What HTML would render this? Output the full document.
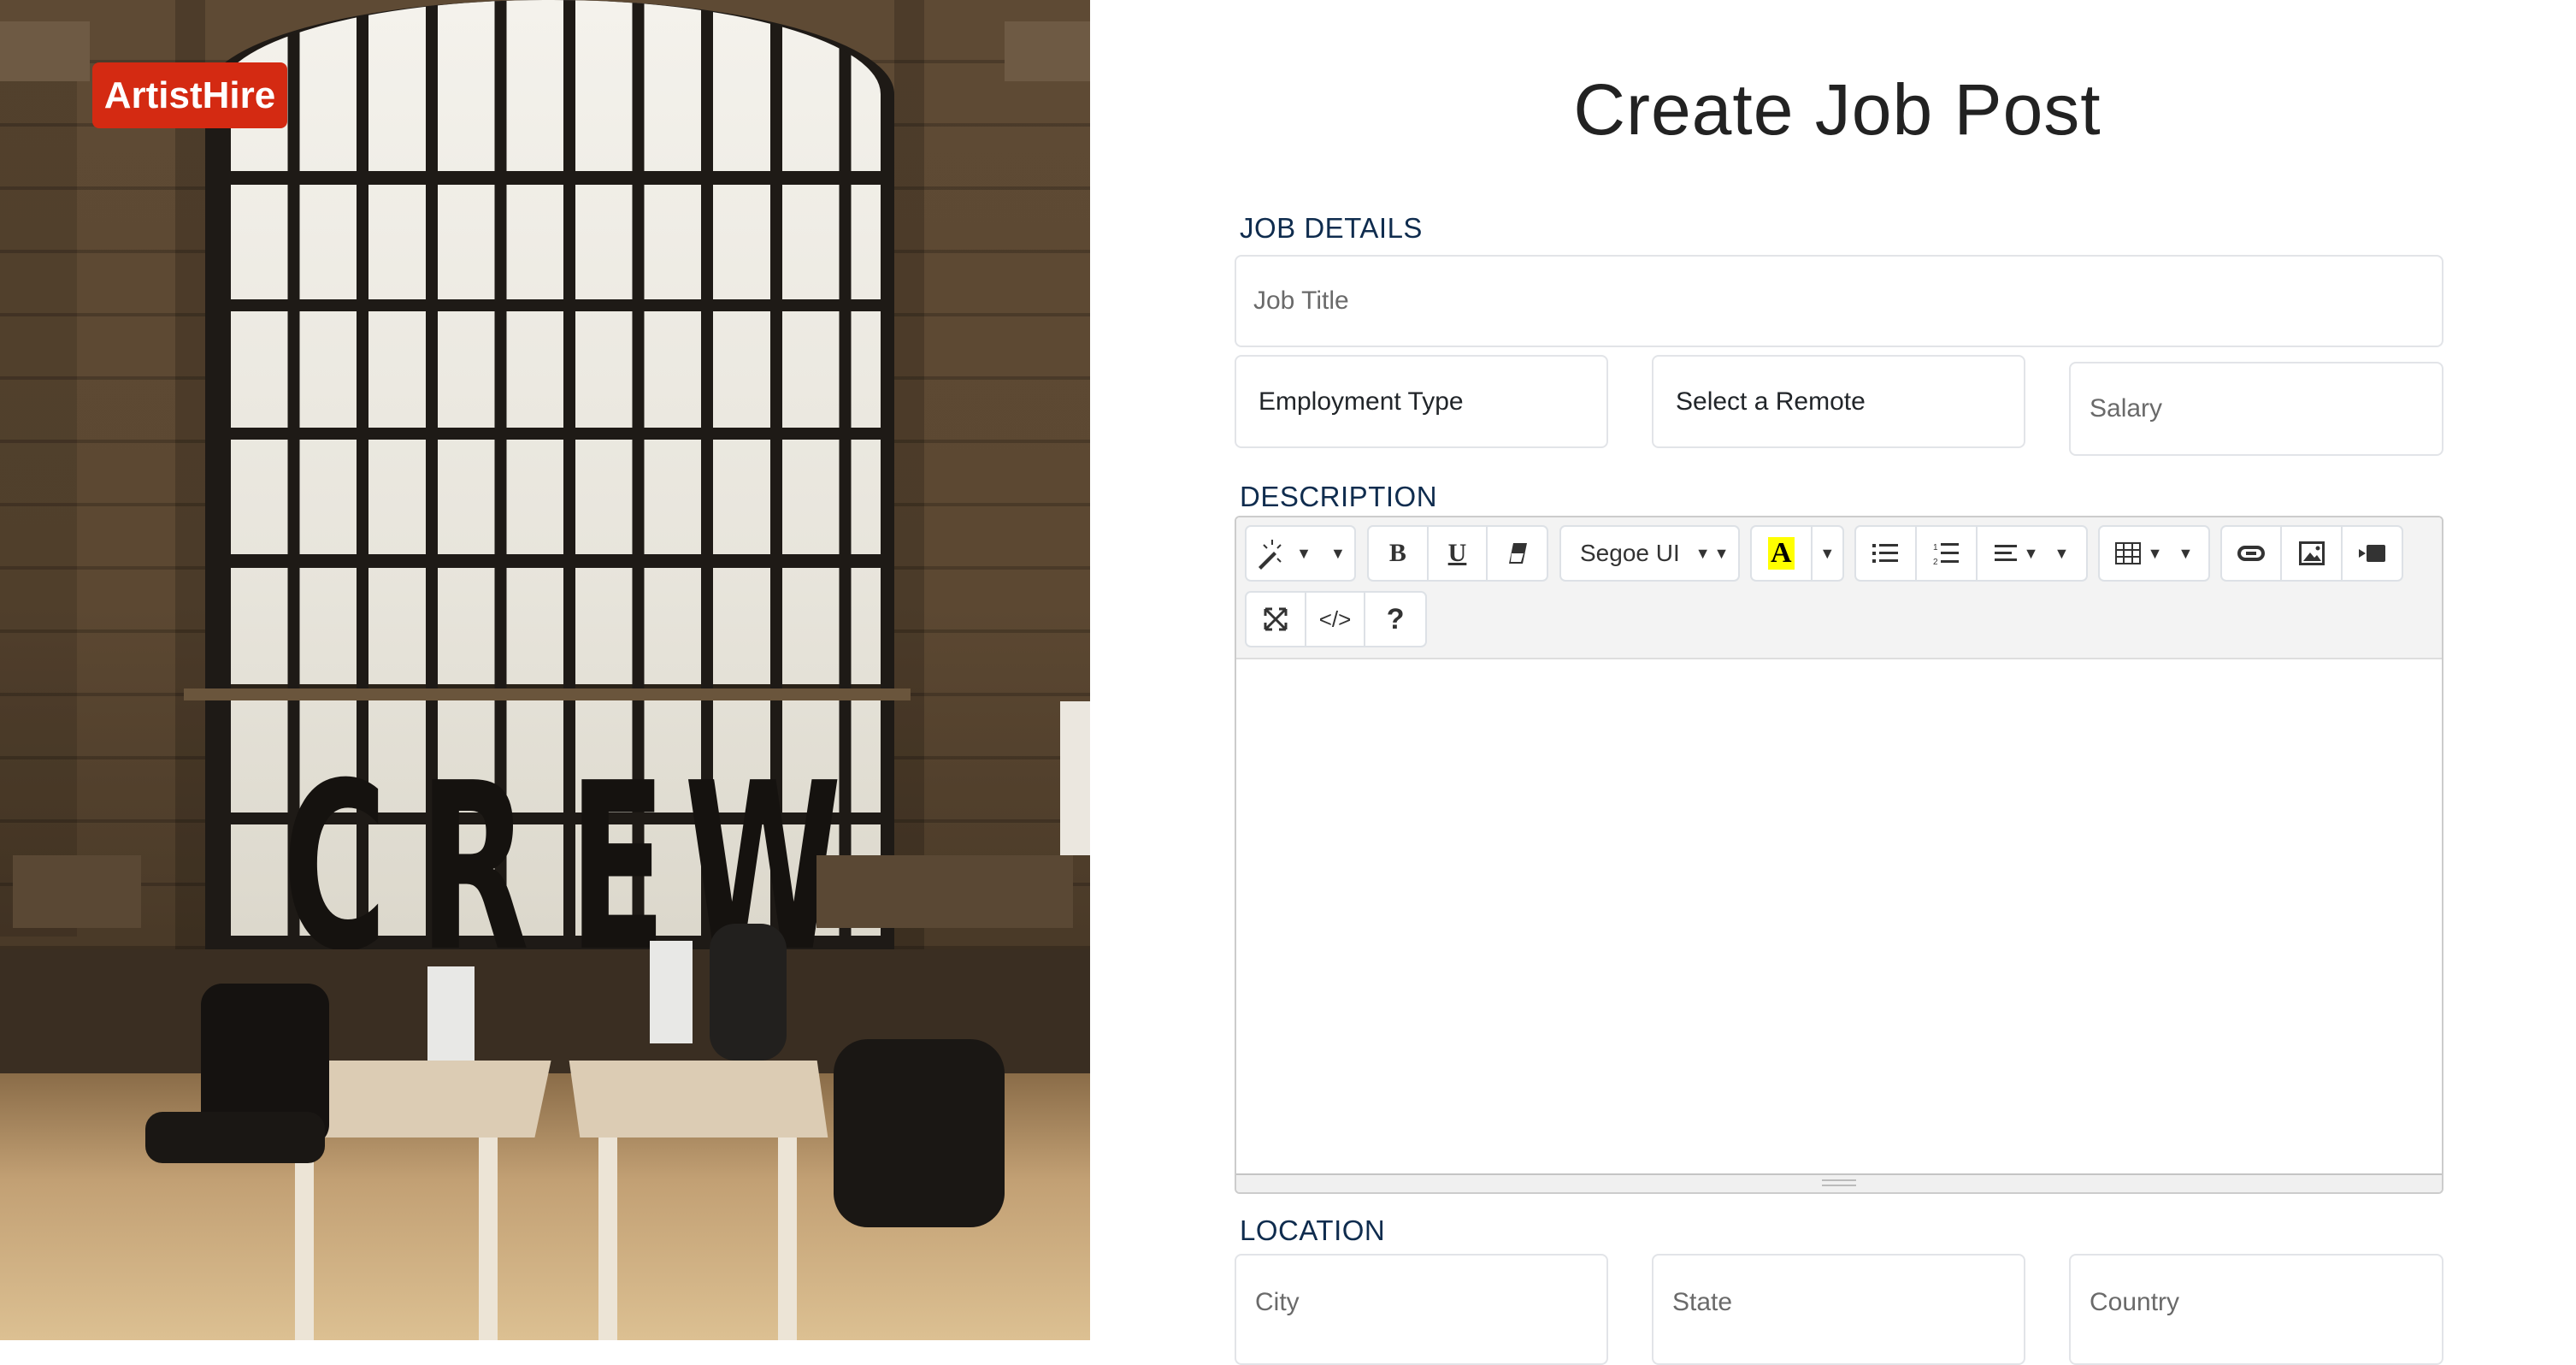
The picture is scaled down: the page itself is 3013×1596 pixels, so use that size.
<!DOCTYPE html>
<html><head><meta charset="utf-8"><style>
*{box-sizing:border-box;margin:0;padding:0}
body{width:3013px;height:1567px;overflow:hidden;background:#fff;font-family:"Liberation Sans",sans-serif;position:relative}
.abs{position:absolute}
.photo{left:0;top:0;width:1275px;height:1567px;background:linear-gradient(180deg,#5e4a34 0%,#5c4832 45%,#4a3a28 70%);overflow:hidden}
.wall{background:repeating-linear-gradient(180deg,rgba(0,0,0,0) 0 70px,rgba(0,0,0,.2) 70px 74px)}
.win{left:240px;top:0;width:806px;height:1110px;border-radius:400px 400px 0 0/110px 110px 0 0;background:
 repeating-linear-gradient(90deg,#1e1a16 0 14px,rgba(0,0,0,0) 14px 80.6px),
 linear-gradient(180deg,rgba(0,0,0,0) 0 200px,#1e1a16 200px 216px,rgba(0,0,0,0) 216px 350px,#1e1a16 350px 364px,rgba(0,0,0,0) 364px 500px,#1e1a16 500px 514px,rgba(0,0,0,0) 514px 648px,#1e1a16 648px 664px,rgba(0,0,0,0) 664px 800px,#2a2218 800px 818px,rgba(0,0,0,0) 818px 950px,#1e1a16 950px 964px,rgba(0,0,0,0) 964px),
 linear-gradient(180deg,#f4f2ec,#e8e5dc 60%,#dcd8cc);border:16px solid #1e1a16;border-top:none}
.L{position:absolute;top:880px;font-family:'DejaVu Sans','Liberation Sans',sans-serif;font-weight:bold;font-size:270px;line-height:1;color:#15120f;transform:scaleX(.62);transform-origin:left top}
.lbl{font-size:33px;color:#0f2c4e;letter-spacing:.5px}
.inp{border:2px solid #e2e4e8;border-radius:8px;background:#fff;font-size:30px;display:flex;align-items:center;padding-left:22px}
.ph{color:#6a6a6a}
.tb{background:#f3f3f3}
.grp{position:absolute;display:flex;border:2px solid #dde1e6;border-radius:7px;background:#fff;height:66px}
.btn{display:flex;align-items:center;justify-content:center;border-right:2px solid #dde1e6;height:100%;font-size:30px;color:#333}
.btn:last-child{border-right:none}
.car{font-size:18px;margin-left:8px}
</style></head><body>
<div class="abs photo">
 <div class="abs wall" style="left:0;top:0;width:1275px;height:1110px"></div>
 <div class="abs" style="left:0;top:25px;width:105px;height:70px;background:#6e5a44"></div>
 <div class="abs" style="left:1175px;top:25px;width:100px;height:70px;background:#6e5a44"></div>
 <div class="abs" style="left:0;top:95px;width:90px;height:1000px;background:rgba(0,0,0,.12)"></div>
 <div class="abs" style="left:205px;top:0;width:35px;height:1110px;background:rgba(0,0,0,.18)"></div>
 <div class="abs" style="left:1046px;top:0;width:35px;height:1110px;background:rgba(0,0,0,.18)"></div>
 <div class="abs win"></div>
 <div class="abs" style="left:215px;top:805px;width:850px;height:14px;background:#6a553c"></div>
 <div class="abs L" style="left:330px">C</div>
 <div class="abs L" style="left:490px">R</div>
 <div class="abs L" style="left:665px">E</div>
 <div class="abs L" style="left:800px">W</div>
 <div class="abs" style="left:0;top:1110px;width:1275px;height:150px;background:#3a2e22"></div>
 <div class="abs" style="left:15px;top:1000px;width:150px;height:85px;background:#5a4834"></div>
 <div class="abs" style="left:955px;top:1000px;width:300px;height:85px;background:#5a4834"></div>
 <div class="abs" style="left:1240px;top:820px;width:35px;height:180px;background:#ebe7df"></div>
 <div class="abs" style="left:0;top:1255px;width:1275px;height:312px;background:linear-gradient(180deg,#8a6c48,#c2a074 40%,#dcc092 100%)"></div>
 <div class="abs" style="left:325px;top:1240px;width:310px;height:90px;background:#dcccb4;transform:skewX(-12deg)"></div>
 <div class="abs" style="left:672px;top:1240px;width:290px;height:90px;background:#dcccb4;transform:skewX(8deg)"></div>
 <div class="abs" style="left:345px;top:1330px;width:22px;height:237px;background:#ece4d6"></div>
 <div class="abs" style="left:560px;top:1330px;width:22px;height:237px;background:#ece4d6"></div>
 <div class="abs" style="left:700px;top:1330px;width:22px;height:237px;background:#ece4d6"></div>
 <div class="abs" style="left:910px;top:1330px;width:22px;height:237px;background:#ece4d6"></div>
 <div class="abs" style="left:500px;top:1130px;width:55px;height:110px;background:#e8e8e6"></div>
 <div class="abs" style="left:760px;top:1100px;width:50px;height:120px;background:#e8e8e6"></div>
 <div class="abs" style="left:235px;top:1150px;width:150px;height:190px;background:#151210;border-radius:25px"></div>
 <div class="abs" style="left:170px;top:1300px;width:210px;height:60px;background:#1a1714;border-radius:20px"></div>
 <div class="abs" style="left:830px;top:1080px;width:90px;height:160px;background:#22201e;border-radius:30px"></div>
 <div class="abs" style="left:975px;top:1215px;width:200px;height:220px;background:#1a1714;border-radius:40px"></div>
 <div class="abs" style="left:108px;top:73px;width:228px;height:77px;background:#d42a12;border-radius:8px;color:#fff;font-weight:bold;font-size:44px;display:flex;align-items:center;justify-content:center">ArtistHire</div>
</div>

<div class="abs" style="left:1275px;top:80px;width:1748px;text-align:center;font-size:84px;color:#222;letter-spacing:1px">Create Job Post</div>

<div class="abs lbl" style="left:1450px;top:248px">JOB DETAILS</div>
<div class="abs inp" style="left:1444px;top:298px;width:1414px;height:108px;padding-left:20px"><span class="ph">Job Title</span></div>
<div class="abs inp" style="left:1444px;top:415px;width:437px;height:109px;padding-left:26px;color:#212529">Employment Type</div>
<div class="abs inp" style="left:1932px;top:415px;width:437px;height:109px;padding-left:26px;color:#212529">Select a Remote</div>
<div class="abs inp" style="left:2420px;top:423px;width:438px;height:110px;padding-left:22px"><span class="ph">Salary</span></div>

<div class="abs lbl" style="left:1450px;top:562px">DESCRIPTION</div>
<div class="abs" style="left:1444px;top:603px;width:1414px;height:793px;border:2px solid #ccc;border-radius:6px;overflow:hidden">
 <div class="abs tb" style="left:0;top:0;width:100%;height:166px;border-bottom:2px solid #ddd"></div>
 <div class="abs" style="left:0;bottom:0;width:100%;height:22px;background:#f0f0f0;border-top:2px solid #c4c4c4"><div style="margin:5px auto;width:40px;height:8px;border-top:2px solid #bbb;border-bottom:2px solid #bbb"></div></div>
</div>
<div class="grp" style="left:1456px;top:614px;width:130px"><div class="btn" style="width:100%;font-size:28px">
<svg width="40" height="40" viewBox="0 0 40 40"><path d="M4 36L22 18l3 3L7 39z" fill="#333"/><path d="M20 4v6M10 10l4 4M30 10l-4 4M26 26l4 4" stroke="#333" stroke-width="2"/></svg><span class="car">▼</span><span class="car" style="margin-left:22px">▼</span></div></div>
<div class="grp" style="left:1599px;top:614px;width:212px">
 <div class="btn" style="width:71px;font-family:'Liberation Serif',serif;font-weight:bold">B</div>
 <div class="btn" style="width:71px;font-family:'Liberation Serif',serif;font-weight:bold;text-decoration:underline">U</div>
 <div class="btn" style="width:70px"><svg width="26" height="28" viewBox="0 0 26 28"><path d="M8 2h16l-5 24H3z" fill="#333"/><path d="M6 14h14l-3 10H5z" fill="#fff"/></svg></div>
</div>
<div class="grp" style="left:1824px;top:614px;width:211px"><div class="btn" style="width:100%;font-size:28px;justify-content:flex-start;padding-left:22px">Segoe UI<span class="car" style="margin-left:18px">▼</span><span class="car" style="margin-left:4px">▼</span></div></div>
<div class="grp" style="left:2047px;top:614px;width:110px">
 <div class="btn" style="width:72px"><span style="background:#ff0;font-family:'Liberation Serif',serif;font-weight:bold;font-size:34px;padding:0 3px;color:#000">A</span></div>
 <div class="btn" style="width:36px"><span style="font-size:18px">▼</span></div>
</div>
<div class="grp" style="left:2169px;top:614px;width:273px">
 <div class="btn" style="width:72px"><svg width="30" height="26" viewBox="0 0 30 26"><g fill="#333"><rect x="0" y="2" width="4" height="4"/><rect x="8" y="2" width="22" height="3"/><rect x="0" y="11" width="4" height="4"/><rect x="8" y="11" width="22" height="3"/><rect x="0" y="20" width="4" height="4"/><rect x="8" y="20" width="22" height="3"/></g></svg></div>
 <div class="btn" style="width:72px"><svg width="30" height="28" viewBox="0 0 30 28"><g fill="#333"><rect x="9" y="2" width="21" height="3"/><rect x="9" y="12" width="21" height="3"/><rect x="9" y="22" width="21" height="3"/></g><text x="0" y="10" font-size="10" fill="#333">1</text><text x="0" y="27" font-size="10" fill="#333">2</text></svg></div>
 <div class="btn" style="width:129px"><svg width="26" height="22" viewBox="0 0 26 22"><g fill="#333"><rect y="1" width="26" height="3"/><rect y="9" width="20" height="3"/><rect y="17" width="26" height="3"/></g></svg><span class="car">▼</span><span class="car" style="margin-left:18px">▼</span></div>
</div>
<div class="grp" style="left:2454px;top:614px;width:131px"><div class="btn" style="width:100%"><svg width="30" height="26" viewBox="0 0 30 26" fill="none" stroke="#333" stroke-width="2"><rect x="1" y="1" width="28" height="24"/><path d="M1 9h28M1 17h28M10 1v24M20 1v24"/></svg><span class="car">▼</span><span class="car" style="margin-left:18px">▼</span></div></div>
<div class="grp" style="left:2597px;top:614px;width:214px">
 <div class="btn" style="width:71px"><svg width="32" height="18" viewBox="0 0 32 18" fill="none" stroke="#333" stroke-width="4"><rect x="2" y="2" width="28" height="14" rx="7"/><path d="M10 9h12"/></svg></div>
 <div class="btn" style="width:71px"><svg width="30" height="28" viewBox="0 0 30 28"><rect x="1.5" y="1.5" width="27" height="25" fill="none" stroke="#333" stroke-width="3"/><path d="M5 23l8-10 5 6 3-3 5 7z" fill="#333"/><circle cx="22" cy="8" r="2.5" fill="#333"/></svg></div>
 <div class="btn" style="width:70px"><svg width="32" height="22" viewBox="0 0 32 22"><rect x="10" y="1" width="22" height="20" rx="2" fill="#333"/><path d="M1 6l8 5-8 5z" fill="#333"/></svg></div>
</div>
<div class="grp" style="left:1456px;top:691px;width:213px">
 <div class="btn" style="width:71px"><svg width="28" height="28" viewBox="0 0 28 28" fill="none" stroke="#333" stroke-width="3"><path d="M3 3l22 22M25 3L3 25"/><path d="M2 2h8M2 2v8M26 2h-8M26 2v8M2 26h8M2 26v-8M26 26h-8M26 26v-8"/></svg></div>
 <div class="btn" style="width:71px;font-size:26px">&lt;/&gt;</div>
 <div class="btn" style="width:71px;font-weight:bold;font-size:34px">?</div>
</div>

<div class="abs lbl" style="left:1450px;top:1420px">LOCATION</div>
<div class="abs inp" style="left:1444px;top:1466px;width:437px;height:130px;padding-left:22px;align-items:flex-start;padding-top:38px"><span class="ph">City</span></div>
<div class="abs inp" style="left:1932px;top:1466px;width:437px;height:130px;padding-left:22px;align-items:flex-start;padding-top:38px"><span class="ph">State</span></div>
<div class="abs inp" style="left:2420px;top:1466px;width:438px;height:130px;padding-left:22px;align-items:flex-start;padding-top:38px"><span class="ph">Country</span></div>
</body></html>
